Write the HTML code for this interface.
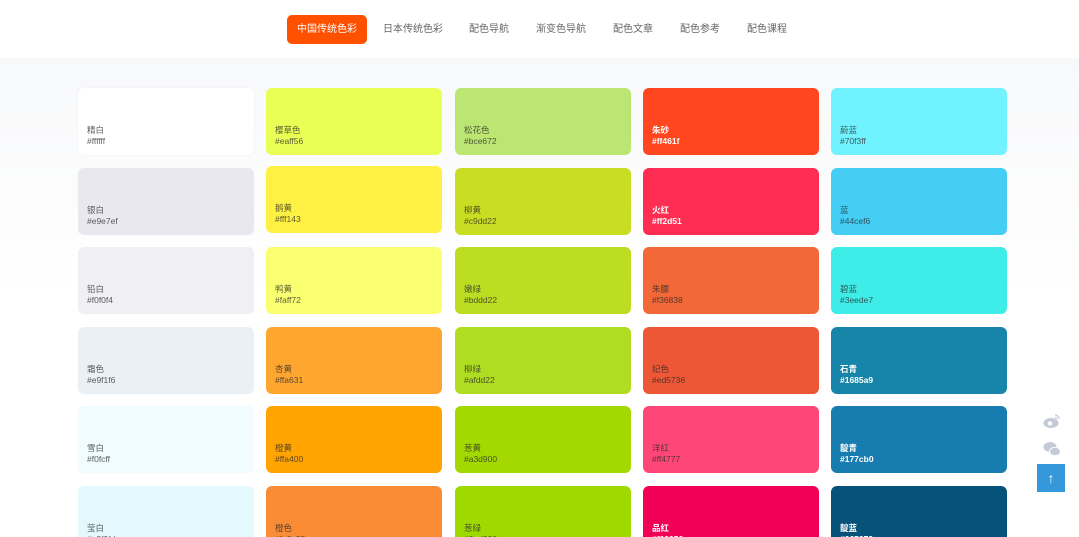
<!DOCTYPE html>
<html><head><meta charset="utf-8"><style>
*{margin:0;padding:0;box-sizing:border-box}
html,body{width:1079px;height:537px;overflow:hidden}
body{font-family:"Liberation Sans","Noto Sans CJK SC",sans-serif;background:linear-gradient(#f6f7f9,#fff 300px);position:relative}
.hd{position:absolute;left:0;top:0;width:1079px;height:58px;background:#fff}
.nav a{position:absolute;top:15px;height:29px;line-height:29px;font-size:10px;color:#666;text-align:center;white-space:nowrap}
.nav a.on{background:#ff5000;color:#fff;border-radius:5px;left:287px;width:80px}
.c{position:absolute;width:176px;height:67px;border-radius:6px;padding:0 9px;font-size:8.5px;color:rgba(40,40,40,.75);white-space:nowrap}
.c .n{position:absolute;left:9px;top:36px}
.c .h{position:absolute;left:9px;top:48px}
.c.w{color:#fff;font-weight:bold}
.side{position:absolute;left:1037px;top:464px;width:28px;height:28px;background:#3498db;color:#fff;text-align:center;line-height:28px;font-size:14px;font-weight:bold}
</style></head><body>
<div class="hd nav">
<a class="on">中国传统色彩</a>
<a style="left:380px;width:66px">日本传统色彩</a>
<a style="left:464px;width:50px">配色导航</a>
<a style="left:531px;width:60px">渐变色导航</a>
<a style="left:608px;width:50px">配色文章</a>
<a style="left:675px;width:50px">配色参考</a>
<a style="left:742px;width:50px">配色课程</a>
</div>
<div id="g"></div>
<svg style="position:absolute;left:1043px;top:413px" width="18" height="16" viewBox="0 0 18 16"><ellipse cx="8" cy="10" rx="7.5" ry="5" fill="#c5cbd6"/><circle cx="7" cy="10.5" r="2.2" fill="#fff"/><path d="M12 2a4 4 0 0 1 4 4M12 4.5a1.6 1.6 0 0 1 1.6 1.6" stroke="#c5cbd6" stroke-width="1.3" fill="none"/></svg>
<svg style="position:absolute;left:1043px;top:441px" width="18" height="16" viewBox="0 0 18 16"><ellipse cx="7" cy="6" rx="6.5" ry="5" fill="#c5cbd6"/><ellipse cx="12" cy="10.5" rx="5.5" ry="4.3" fill="#c5cbd6" stroke="#fff" stroke-width="1"/></svg>
<div class="side">↑</div>
<script>
var d=[
["精白","#ffffff"],["樱草色","#eaff56"],["松花色","#bce672"],["朱砂","#ff461f",1],["蔚蓝","#70f3ff"],
["银白","#e9e7ef"],["鹅黄","#fff143"],["柳黄","#c9dd22"],["火红","#ff2d51",1],["蓝","#44cef6"],
["铅白","#f0f0f4"],["鸭黄","#faff72"],["嫩绿","#bddd22"],["朱膘","#f36838"],["碧蓝","#3eede7"],
["霜色","#e9f1f6"],["杏黄","#ffa631"],["柳绿","#afdd22"],["妃色","#ed5736"],["石青","#1685a9",1],
["雪白","#f0fcff"],["橙黄","#ffa400"],["葱黄","#a3d900"],["洋红","#ff4777"],["靛青","#177cb0",1],
["莹白","#e3f9fd"],["橙色","#fa8c35"],["葱绿","#9ed900"],["品红","#f00056",1],["靛蓝","#065279",1]];
var xs=[78,266,455,643,831],ys=[88,168,247,327,406,486],h="";
d.forEach(function(e,i){var x=xs[i%5],y=ys[Math.floor(i/5)];if(i==6)y=166;
h+='<div class="c'+(e[2]?' w':'')+'" style="left:'+x+'px;top:'+y+'px;background:'+e[1]+(e[1]=='#ffffff'?';box-shadow:0 0 2px #eee':'')+'"><span class="n">'+e[0]+'</span><span class="h">'+e[1]+'</span></div>';});
document.getElementById('g').innerHTML=h;
</script>
</body></html>
